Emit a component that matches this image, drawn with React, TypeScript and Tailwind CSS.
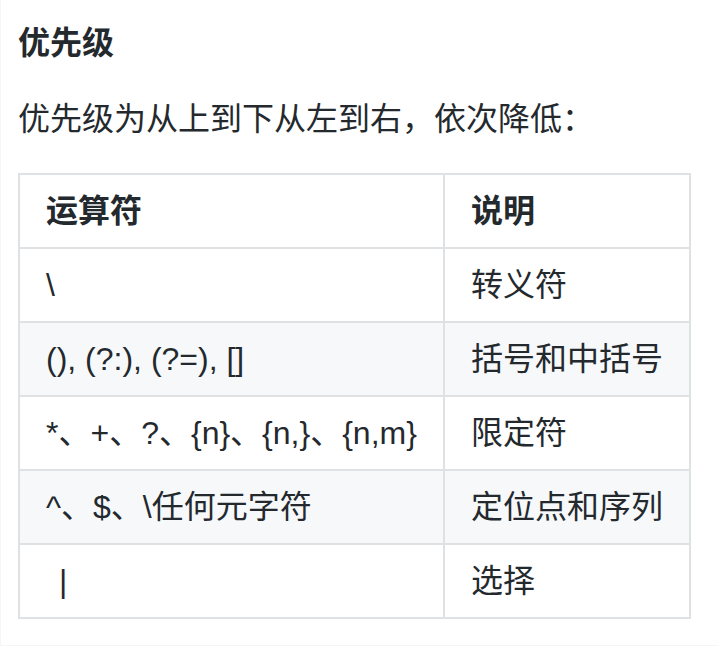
import React from 'react';

interface Row {
  op: string;
  desc: string;
}

const rows: Row[] = [
  { op: '\\', desc: '转义符' },
  { op: '(), (?:), (?=), []', desc: '括号和中括号' },
  { op: '*、+、?、{n}、{n,}、{n,m}', desc: '限定符' },
  { op: '^、$、\\任何元字符', desc: '定位点和序列' },
  { op: '|', desc: '选择' },
];

export default function App() {
  return (
    <div
      className="w-[718px] h-[646px] bg-white text-[#24292e] border-l border-b border-[#f5f5f5] pl-[17px] pt-[23px]"
      style={{ fontFamily: '"Liberation Sans", "Noto Sans CJK SC", sans-serif' }}
    >
      {/* 見出し */}
      <h4 className="text-[32px] leading-[40px] font-bold mb-[32px]">优先级</h4>
      <p className="text-[32px] leading-[48px] mb-[30px]">优先级为从上到下从左到右，依次降低：</p>

      <table className="border-collapse w-[673px] text-[32px] leading-[48px]">
        <thead>
          <tr className="bg-white">
            <th className="w-[428px] border-2 border-[#dfe2e5] px-[26px] py-[12px] text-left font-bold">运算符</th>
            <th className="border-2 border-[#dfe2e5] px-[26px] py-[12px] text-left font-bold">说明</th>
          </tr>
        </thead>
        <tbody>
          {rows.map((row, i) => (
            <tr key={i} className={i % 2 === 1 ? 'bg-[#f6f8fa]' : 'bg-white'}>
              <td className="border-2 border-[#dfe2e5] px-[26px] py-[12px] whitespace-nowrap">
                {row.op === '|' ? <span className="pl-[13px]">|</span> : row.op}
              </td>
              <td className="border-2 border-[#dfe2e5] px-[26px] py-[12px] whitespace-nowrap">{row.desc}</td>
            </tr>
          ))}
        </tbody>
      </table>
    </div>
  );
}
